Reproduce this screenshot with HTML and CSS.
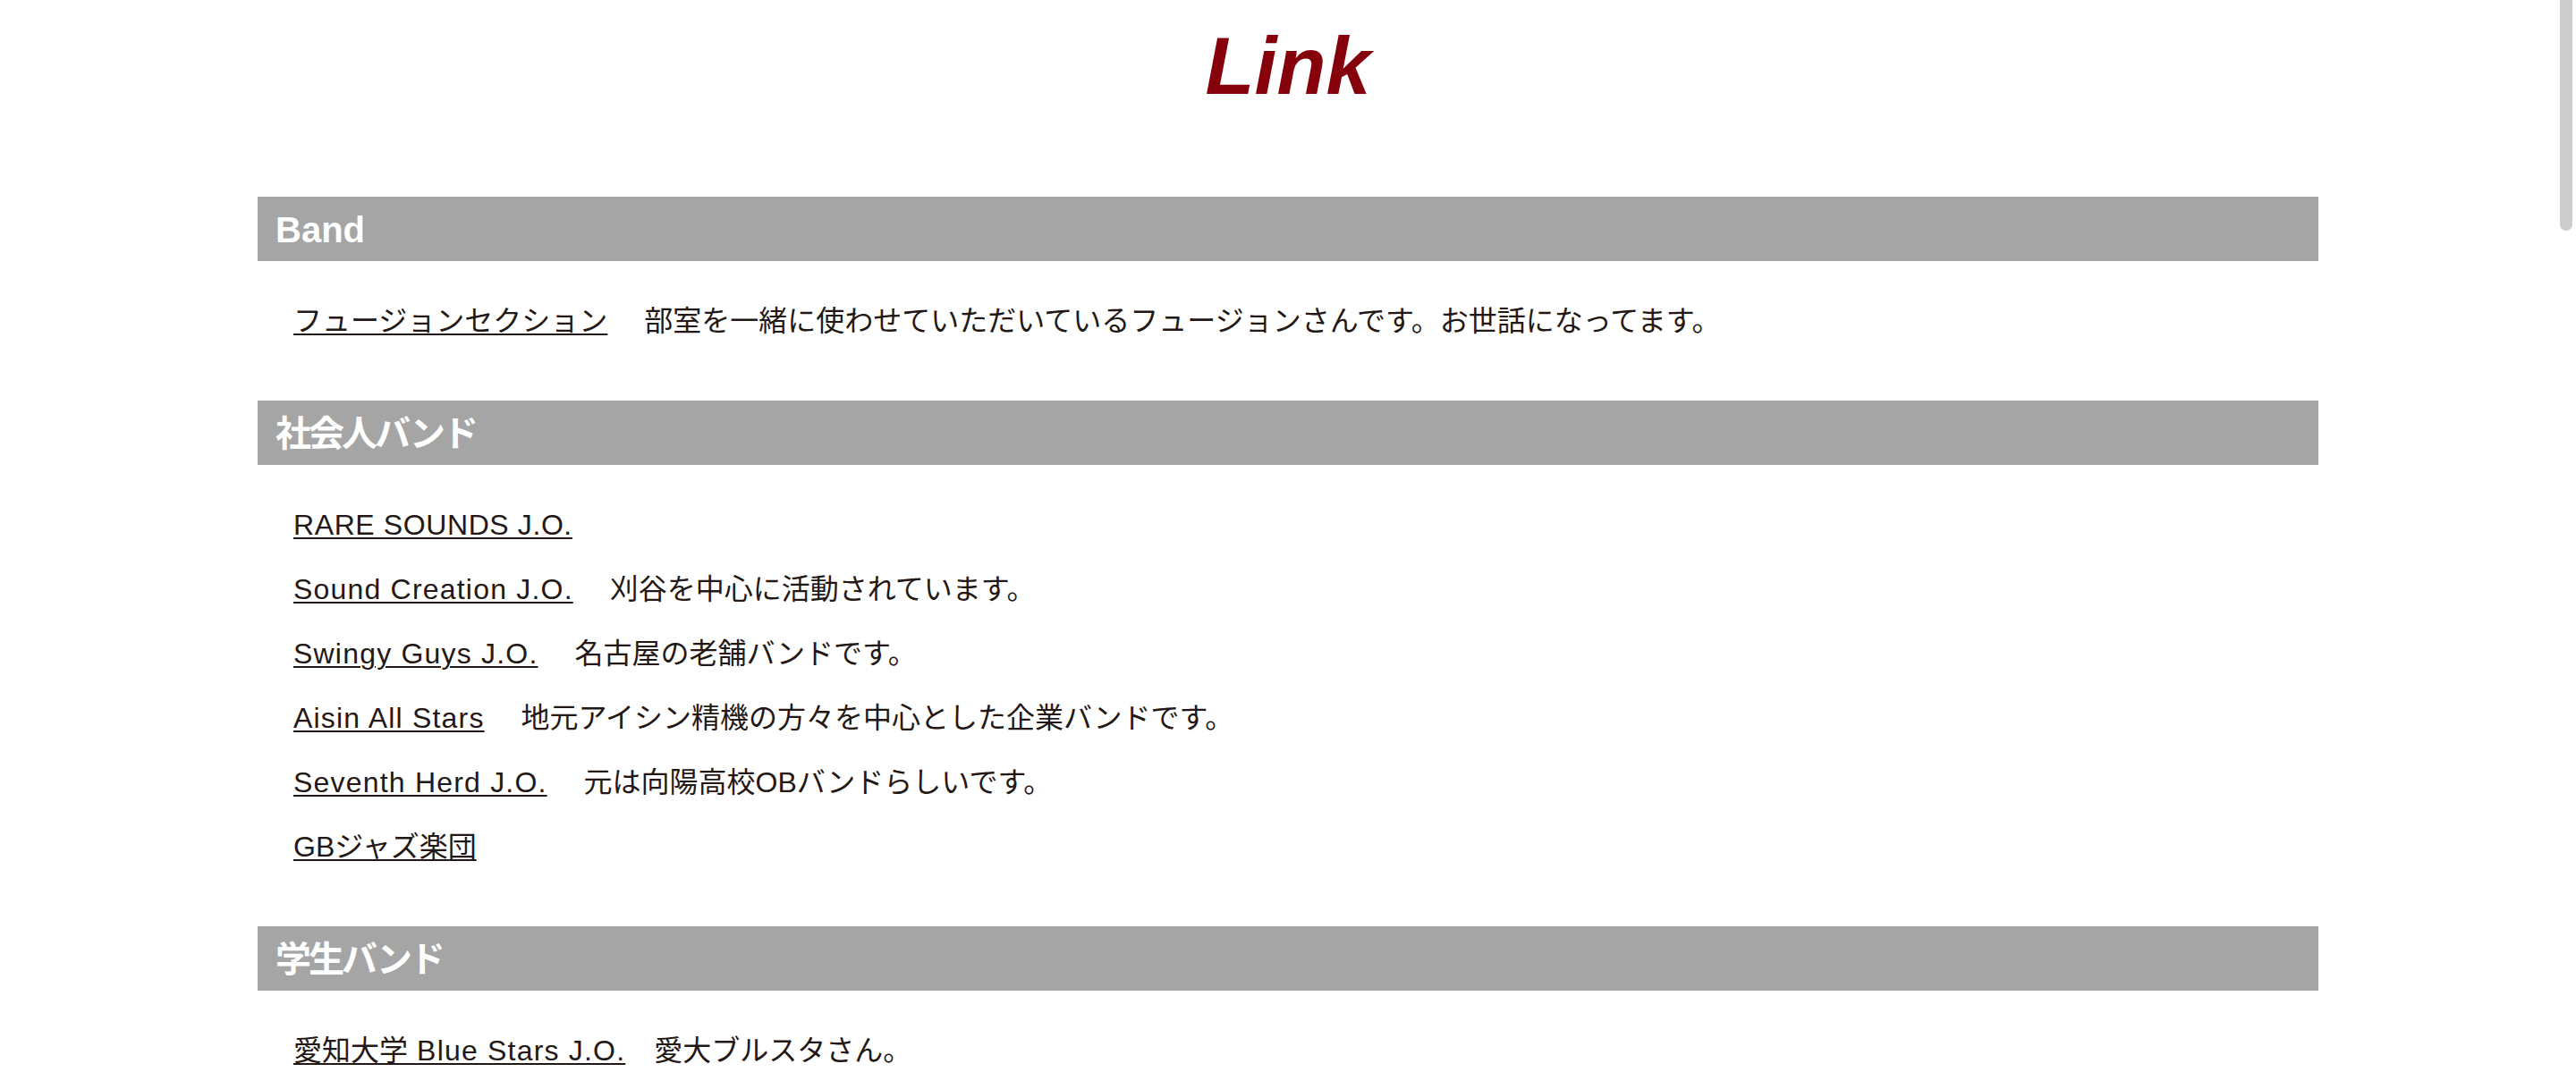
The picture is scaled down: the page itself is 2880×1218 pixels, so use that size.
FILE: index.html
```html
<!DOCTYPE html>
<html lang="ja">
<head>
<meta charset="utf-8">
<title>Link</title>
<link rel="stylesheet" href="styles.css">
</head>
<body>
<h1 class="page-title">Link</h1>
<main class="content">
  <section class="group">
    <h2 class="group-head">Band</h2>
    <ul class="links">
      <li class="link-row"><a href="#">フュージョンセクション</a> 　部室を一緒に使わせていただいているフュージョンさんです。お世話になってます。</li>
    </ul>
  </section>
  <section class="group">
    <h2 class="group-head group-head--ja">社会人バンド</h2>
    <ul class="links">
      <li class="link-row"><a href="#" class="en en--caps">RARE SOUNDS J.O.</a></li>
      <li class="link-row"><a href="#" class="en">Sound Creation J.O.</a> 　刈谷を中心に活動されています。</li>
      <li class="link-row"><a href="#" class="en">Swingy Guys J.O.</a> 　名古屋の老舗バンドです。</li>
      <li class="link-row"><a href="#" class="en">Aisin All Stars</a> 　地元アイシン精機の方々を中心とした企業バンドです。</li>
      <li class="link-row"><a href="#" class="en">Seventh Herd J.O.</a> 　元は向陽高校OBバンドらしいです。</li>
      <li class="link-row"><a href="#">GBジャズ楽団</a></li>
    </ul>
  </section>
  <section class="group">
    <h2 class="group-head group-head--ja">学生バンド</h2>
    <ul class="links">
      <li class="link-row"><a href="#">愛知大学<span class="en"> Blue Stars J.O.</span></a>　愛大ブルスタさん。</li>
    </ul>
  </section>
</main>
<div class="overlay-scrollbar"></div>
</body>
</html>
```
FILE: styles.css
```css
html, body {
  margin: 0;
  padding: 0;
  background: #ffffff;
}

body {
  font-family: "Liberation Sans", "Noto Sans CJK JP", sans-serif;
  color: #231815;
}

.page-title {
  margin: 29px 0 0;
  height: 90px;
  font-size: 90px;
  line-height: 90px;
  font-weight: bold;
  font-style: italic;
  text-align: center;
  color: #85000a;
}

.content {
  width: 80%;
  margin: 101px auto 0;
}

.group-head {
  margin: 0;
  height: 72px;
  box-sizing: border-box;
  padding: 2px 20px 0;
  line-height: 70px;
  font-size: 40px;
  font-weight: bold;
  color: #ffffff;
  background: #a5a5a5;
}

.group-head--ja {
  letter-spacing: -3px;
}

.links {
  list-style: none;
  margin: 0;
  padding: 31px 0 53px 40px;
}

.link-row {
  height: 72px;
  line-height: 72px;
  font-size: 32px;
  white-space: nowrap;
}

.link-row a {
  color: #231815;
  text-decoration: underline;
  text-decoration-thickness: 2px;
  text-underline-offset: 3px;
}

.en {
  letter-spacing: 1.2px;
}

.en--caps {
  letter-spacing: 0.6px;
}

.overlay-scrollbar {
  position: fixed;
  top: 0;
  right: 4px;
  width: 14px;
  height: 258px;
  border-radius: 0 0 7px 7px;
  background: #cdcdcd;
}
```
